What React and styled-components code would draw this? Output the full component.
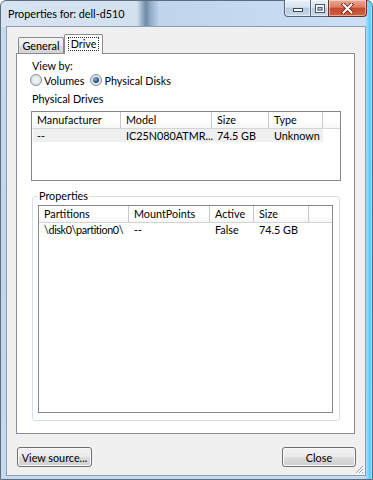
import React from "react";
import styled, { createGlobalStyle } from "styled-components";

const FONT = `"Lato", "Liberation Sans", sans-serif`;

const GlobalStyle = createGlobalStyle`
  html, body { margin: 0; padding: 0; background: #ffffff; }
  body { font-family: ${FONT}; font-size: 10.8px; color: #000; }
  #root { width: 373px; height: 480px; }
`;

const Window = styled.div`
  position: relative;
  box-sizing: border-box;
  width: 373px;
  height: 480px;
  display: flex;
  flex-direction: column;
  border: 1px solid #5d6d80;
  border-radius: 6px 6px 0 0;
  padding: 0 6px 3px 5px;
  background:
    linear-gradient(to right, rgba(140, 220, 255, 0) 364px, rgba(110, 215, 255, 0.85) 367px, rgba(70, 205, 255, 0.95) 369px, rgba(150, 215, 245, 0.4) 371px),
    linear-gradient(to right, #d7e3f0 0, #d3e0ee 136px, #9ab0c8 141px, #6f89a6 145px, #8ea7c2 149px, #c0d5ec 158px, #cbdff5 100%) top / 100% 26px no-repeat,
    linear-gradient(to bottom, #c8dbef, #bfd5ec 60%, #c7dbf0);
`;

const TitleBar = styled.div`
  height: 25px;
  display: flex;
  align-items: center;
`;

const Title = styled.span`
  margin-left: 2px;
  font-size: 10.8px;
  color: #000;
  white-space: nowrap;
`;

const CaptionGroup = styled.div`
  display: flex;
  align-self: flex-start;
  margin: -1px -1px 0 auto;
`;

const CaptionButton = styled.div`
  box-sizing: border-box;
  width: ${(p) => p.$w}px;
  height: 17px;
  display: flex;
  align-items: center;
  justify-content: center;
  border: 1px solid ${(p) => (p.$close ? "#6b3326" : "#55667c")};
  border-top: none;
  margin-left: ${(p) => (p.$first ? 0 : -1)}px;
  border-radius: ${(p) => p.$radius};
  background: ${(p) =>
    p.$close
      ? "linear-gradient(#e9a996 0%, #dc7c64 45%, #c8482e 52%, #d2603f 100%)"
      : "linear-gradient(#eaf1f8 0%, #d6e2ef 45%, #b7c9dd 52%, #c9daec 100%)"};
  box-shadow: inset 0 0 0 1px rgba(255, 255, 255, 0.45);
`;

const Client = styled.div`
  position: relative;
  flex: 1;
  display: flex;
  flex-direction: column;
  min-height: 0;
  background: #f0f0f0;
  border: 1px solid #8a9fb6;
  padding: 7px 10px 8px 9px;
`;

const TabStrip = styled.div`
  height: 19px;
  display: flex;
  align-items: flex-end;
  padding-left: 2px;
`;

const Tab = styled.div`
  position: relative;
  z-index: 2;
  box-sizing: border-box;
  width: ${(p) => p.$w}px;
  height: ${(p) => (p.$active ? 20 : 16)}px;
  margin-bottom: ${(p) => (p.$active ? -1 : 0)}px;
  display: flex;
  align-items: center;
  justify-content: center;
  border: 1px solid #898c95;
  border-bottom: none;
  border-radius: 2px 2px 0 0;
  background: ${(p) =>
    p.$active ? "#ffffff" : "linear-gradient(#f3f3f3 0%, #ebebeb 50%, #dddddd 51%, #d3d3d3 100%)"};
  padding-bottom: ${(p) => (p.$active ? 1 : 0)}px;
`;

const FocusText = styled.span`
  display: inline-block;
  border: 1px dotted #303030;
  padding: 0 2px;
  line-height: 12px;
`;

const Panel = styled.div`
  flex: 1;
  min-height: 0;
  display: flex;
  flex-direction: column;
  background: #ffffff;
  border: 1px solid #898c95;
  padding: 5px 13px 12px 14px;
`;

const Label = styled.div`
  margin: ${(p) => p.$top || 0}px 0 0 1px;
  line-height: 14px;
  height: 14px;
  white-space: nowrap;
`;

const RadioRow = styled.div`
  display: flex;
  align-items: center;
  height: 14px;
  margin-left: -1px;
`;

const RadioOption = styled.label`
  display: inline-flex;
  align-items: center;
  gap: 2px;
  margin-right: 6px;
  white-space: nowrap;
`;

const RadioDot = styled.span`
  box-sizing: border-box;
  width: 12px;
  height: 12px;
  border-radius: 50%;
  border: 1px solid #8b8f94;
  display: inline-flex;
  align-items: center;
  justify-content: center;
  background: radial-gradient(circle at 50% 50%, #f4f7fa 0, #dfe7ef 55%, #c4d0dc 100%);
  &::after {
    content: "";
    display: ${(p) => (p.$checked ? "block" : "none")};
    width: 6px;
    height: 6px;
    border-radius: 50%;
    background: radial-gradient(circle at 40% 35%, #8fb3d6 0, #2f5a84 55%, #16304e 100%);
  }
`;

const ListBox = styled.div`
  box-sizing: border-box;
  display: flex;
  flex-direction: column;
  background: #ffffff;
  border: 1px solid #828790;
  overflow: hidden;
  margin-top: ${(p) => p.$top || 0}px;
  height: ${(p) => (p.$h ? `${p.$h}px` : "auto")};
  flex: ${(p) => (p.$grow ? 1 : "none")};
`;

const HeaderRow = styled.div`
  box-sizing: border-box;
  display: flex;
  height: 17px;
  border-bottom: 1px solid #d5d5d5;
  background: linear-gradient(#ffffff 0%, #ffffff 60%, #f5f6f7 100%);
`;

const HeaderCell = styled.div`
  box-sizing: border-box;
  flex: ${(p) => (p.$w ? "none" : 1)};
  width: ${(p) => (p.$w ? `${p.$w}px` : "auto")};
  padding-left: 5px;
  line-height: 16px;
  border-right: ${(p) => (p.$w ? "1px solid #c9c9c9" : "none")};
  white-space: nowrap;
  overflow: hidden;
`;

const DataRow = styled.div`
  display: flex;
  width: max-content;
  height: 13px;
  line-height: 13px;
  margin-left: ${(p) => (p.$selected ? 1 : 0)}px;
  background: ${(p) => (p.$selected ? "#efefef" : "transparent")};
`;

const Cell = styled.div`
  box-sizing: border-box;
  width: ${(p) => p.$w}px;
  padding-left: ${(p) => p.$pad}px;
  white-space: nowrap;
  letter-spacing: ${(p) => (p.$tight ? "-0.4px" : "0")};
`;

const GroupBox = styled.fieldset`
  flex: 1;
  min-height: 0;
  min-width: 0;
  display: flex;
  flex-direction: column;
  margin: 8px 1px 0 1px;
  padding: 2px 6px 7px 5px;
  border: 1px solid #d5dfe5;
  border-radius: 3px;
`;

const GroupLegend = styled.legend`
  padding: 0 1px;
  line-height: 14px;
  font-size: 10.8px;
`;

const ButtonRow = styled.div`
  display: flex;
  justify-content: space-between;
  margin: 13px -1px 0 1px;
`;

const DialogButton = styled.button`
  box-sizing: border-box;
  width: ${(p) => p.$w}px;
  height: 20px;
  padding: 0;
  font-family: ${FONT};
  font-size: 10.8px;
  color: #000;
  border: 1px solid #707070;
  border-radius: 3px;
  background: linear-gradient(#f2f2f2 0%, #ebebeb 50%, #dddddd 51%, #cfcfcf 100%);
  box-shadow: inset 0 0 0 1px #fbfbfb;
`;

const Grip = styled.svg`
  position: absolute;
  right: 1px;
  bottom: 1px;
`;

const drivesCols = [
  { label: "Manufacturer", w: 89 },
  { label: "Model", w: 91 },
  { label: "Size", w: 57 },
  { label: "Type", w: 54 },
];
const drivesRows = [["--", "IC25N080ATMR...", "74.5 GB", "Unknown"]];

const partCols = [
  { label: "Partitions", w: 90, tight: true },
  { label: "MountPoints", w: 81 },
  { label: "Active", w: 44 },
  { label: "Size", w: 55 },
];
const partRows = [["\\disk0\\partition0\\", "--", "False", "74.5 GB"]];

function ListView({ cols, rows, selected, ...rest }) {
  return (
    <ListBox {...rest}>
      <HeaderRow>
        {cols.map((c) => (
          <HeaderCell key={c.label} $w={c.w}>
            {c.label}
          </HeaderCell>
        ))}
        <HeaderCell />
      </HeaderRow>
      {rows.map((r, i) => (
        <DataRow key={i} $selected={selected === i}>
          {r.map((v, j) => (
            <Cell
              key={j}
              $w={cols[j].w - (selected === i && j === 0 ? 1 : 0)}
              $pad={selected === i && j === 0 ? 4 : 5}
              $tight={cols[j].tight}
            >
              {v}
            </Cell>
          ))}
        </DataRow>
      ))}
    </ListBox>
  );
}

function MinGlyph() {
  return (
    <svg width="14" height="10" viewBox="0 0 14 10">
      <rect x="2.5" y="5.5" width="9" height="3" fill="#ffffff" stroke="#3c4a5c" strokeWidth="1" />
    </svg>
  );
}
function MaxGlyph() {
  return (
    <svg width="12" height="11" viewBox="0 0 12 11">
      <rect x="1.5" y="1.5" width="9" height="8" fill="none" stroke="#3c4a5c" strokeWidth="1" />
      <rect x="2.5" y="2.5" width="7" height="6" fill="none" stroke="#ffffff" strokeWidth="1.2" />
      <rect x="4" y="4.5" width="4" height="2.5" fill="none" stroke="#3c4a5c" strokeWidth="0.8" />
    </svg>
  );
}
function CloseGlyph() {
  return (
    <svg width="13" height="11" viewBox="0 0 13 11">
      <path d="M2.5 1.5 L10.5 9.5 M10.5 1.5 L2.5 9.5" stroke="#5a2418" strokeWidth="3.6" strokeLinecap="square" />
      <path d="M2.5 1.5 L10.5 9.5 M10.5 1.5 L2.5 9.5" stroke="#ffffff" strokeWidth="2" strokeLinecap="square" />
    </svg>
  );
}

export default function App() {
  return (
    <>
      <GlobalStyle />
      <Window>
        <TitleBar>
          <Title>Properties for: dell-d510</Title>
          <CaptionGroup>
            <CaptionButton $w={27} $first $radius="0 0 0 4px">
              <MinGlyph />
            </CaptionButton>
            <CaptionButton $w={19} $radius="0">
              <MaxGlyph />
            </CaptionButton>
            <CaptionButton $w={39} $close $radius="0 0 4px 0">
              <CloseGlyph />
            </CaptionButton>
          </CaptionGroup>
        </TitleBar>
        <Client>
          <TabStrip>
            <Tab $w={46}>General</Tab>
            <Tab $w={39} $active>
              <FocusText>Drive</FocusText>
            </Tab>
          </TabStrip>
          <Panel>
            <Label>View by:</Label>
            <RadioRow>
              <RadioOption>
                <RadioDot />
                Volumes
              </RadioOption>
              <RadioOption>
                <RadioDot $checked />
                Physical Disks
              </RadioOption>
            </RadioRow>
            <Label $top={5}>Physical Drives</Label>
            <ListView cols={drivesCols} rows={drivesRows} selected={0} $top={5} $h={70} />
            <GroupBox>
              <GroupLegend>Properties</GroupLegend>
              <ListView cols={partCols} rows={partRows} $grow />
            </GroupBox>
          </Panel>
          <ButtonRow>
            <DialogButton $w={75}>View source...</DialogButton>
            <DialogButton $w={74}>Close</DialogButton>
          </ButtonRow>
          <Grip width="9" height="9" viewBox="0 0 9 9">
            <path d="M8 1 L1 8 M8 4 L4 8 M8 7 L7 8" stroke="#9aa4ae" strokeWidth="1" />
            <path d="M9 2 L2 9 M9 5 L5 9" stroke="#ffffff" strokeWidth="1" />
          </Grip>
        </Client>
      </Window>
    </>
  );
}
